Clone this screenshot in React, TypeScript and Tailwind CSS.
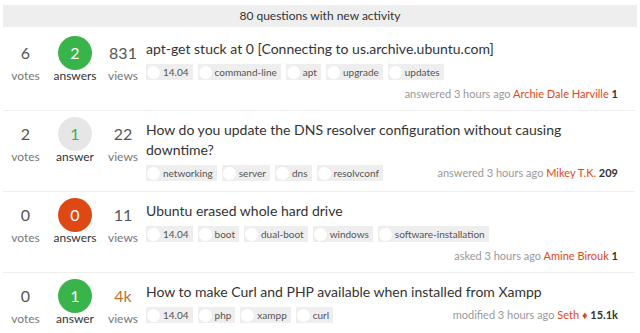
import React from 'react';

type Question = {
  votes: string;
  answers: string;
  answerLabel: string;
  answerStyle: 'green' | 'orange' | 'gray';
  views: string;
  hotViews?: boolean;
  title: string;
  tags: string[];
  action: string;
  user: string;
  mod?: boolean;
  rep: string;
};

const QUESTIONS: Question[] = [
  {
    votes: '6',
    answers: '2',
    answerLabel: 'answers',
    answerStyle: 'green',
    views: '831',
    title: 'apt-get stuck at 0 [Connecting to us.archive.ubuntu.com]',
    tags: ['14.04', 'command-line', 'apt', 'upgrade', 'updates'],
    action: 'answered 3 hours ago',
    user: 'Archie Dale Harville',
    rep: '1',
  },
  {
    votes: '2',
    answers: '1',
    answerLabel: 'answer',
    answerStyle: 'gray',
    views: '22',
    title: 'How do you update the DNS resolver configuration without causing downtime?',
    tags: ['networking', 'server', 'dns', 'resolvconf'],
    action: 'answered 3 hours ago',
    user: 'Mikey T.K.',
    rep: '209',
  },
  {
    votes: '0',
    answers: '0',
    answerLabel: 'answers',
    answerStyle: 'orange',
    views: '11',
    title: 'Ubuntu erased whole hard drive',
    tags: ['14.04', 'boot', 'dual-boot', 'windows', 'software-installation'],
    action: 'asked 3 hours ago',
    user: 'Amine Birouk',
    rep: '1',
  },
  {
    votes: '0',
    answers: '1',
    answerLabel: 'answer',
    answerStyle: 'green',
    views: '4k',
    hotViews: true,
    title: 'How to make Curl and PHP available when installed from Xampp',
    tags: ['14.04', 'php', 'xampp', 'curl'],
    action: 'modified 3 hours ago',
    user: 'Seth',
    mod: true,
    rep: '15.1k',
  },
];

const circleClass = {
  green: 'bg-[#38b44a] text-white',
  orange: 'bg-[#dd4814] text-white',
  gray: 'bg-[#e6e6e6] text-[#38b44a]',
};

const Tag = ({ name }: { name: string }) => (
  <span className="flex items-center h-[16px] bg-[#eeeeee] pr-[4px] text-[10px] text-[#555] leading-[16px]">
    <span className="w-[13px] h-[13px] rounded-full bg-white ml-[1px] mr-[3px]" />
    {name}
  </span>
);

const QuestionRow = ({ q }: { q: Question }) => (
  <div className="flex min-h-[81px] border-b border-[#eeeeee] pt-[6px] pb-[6px]">
    <div className="w-[45px] flex flex-col items-center">
      <div className="h-[34px] flex items-center text-[16px] text-[#555]">{q.votes}</div>
      <div className="text-[12px] leading-[12px] text-[#777]">votes</div>
    </div>
    <div className="w-[54px] flex flex-col items-center">
      <div
        className={`w-[34px] h-[34px] rounded-full flex items-center justify-center text-[16px] ${circleClass[q.answerStyle]}`}
      >
        {q.answers}
      </div>
      <div className="text-[12px] leading-[12px] text-[#333]">{q.answerLabel}</div>
    </div>
    <div className="w-[42px] flex flex-col items-center">
      <div
        className={`h-[34px] flex items-center text-[16px] ${q.hotViews ? 'text-[#b8742e]' : 'text-[#555]'}`}
      >
        {q.views}
      </div>
      <div className="text-[12px] leading-[12px] text-[#777]">views</div>
    </div>
    <div className="flex-1 ml-[2px] pr-[17px] pt-[3px]">
      <div className="text-[14px] leading-[20px] text-[#333]">{q.title}</div>
      <div className="flex flex-wrap items-center gap-y-[6px] mt-[5px]">
        <div className="flex gap-[5px]">
          {q.tags.map((t) => (
            <Tag key={t} name={t} />
          ))}
        </div>
        <div className="ml-auto text-[11px] leading-[16px] text-[#999] whitespace-nowrap">
          {q.action} <span className="text-[#dd4814]">{q.user}</span>
          {q.mod && <span className="text-[#dd4814]"> ♦</span>}{' '}
          <span className="font-bold text-[#333]">{q.rep}</span>
        </div>
      </div>
    </div>
  </div>
);

export default function App() {
  return (
    <div className="w-[640px] h-[333px] overflow-hidden bg-white px-[3px] pt-[5px] font-['Lato',sans-serif]">
      <div className="h-[22px] bg-[#eeeeee] text-center text-[12px] leading-[22px] text-[#333]">
        80 questions with new activity
      </div>
      <div className="mt-[3px] mr-[2px]">
        {QUESTIONS.map((q) => (
          <QuestionRow key={q.title} q={q} />
        ))}
      </div>
    </div>
  );
}
